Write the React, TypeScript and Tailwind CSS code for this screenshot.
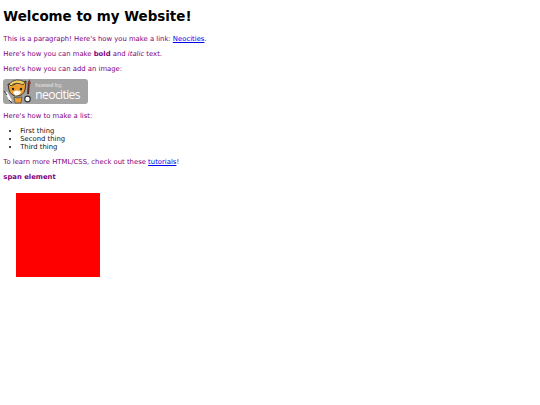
export default function App() {
  return (
    <div className="min-h-[405px] bg-white px-[3.36px] pt-[9px] text-[6.85px] leading-[8px] text-[#800080] [font-family:'DejaVu_Sans',sans-serif]">
      <h1 className="text-[13.44px] font-bold leading-[15.6px] text-black">Welcome to my Website!</h1>
      <p className="mt-[10px]">
        This is a paragraph! Here's how you make a link: <a className="text-[#0000ee] underline" href="#">Neocities</a>.
      </p>
      <p className="mt-[7px]">
        Here's how you can make <b>bold</b> and <i>italic</i> text.
      </p>
      <p className="mt-[7px]">Here's how you can add an image:</p>
      <div className="relative mt-[6px] flex h-[25px] w-[85px] overflow-hidden rounded-[3px] bg-[#a3a3a3]">
        <svg viewBox="0 0 30 25" className="h-[25px] w-[30px] shrink-0">
          <path d="M6 11 L5 5 L10 6 Q14 3 19 4 L23 2 L22 11 Q20 17 14 17 Q8 17 6 11Z" fill="#f0a030" stroke="#333" strokeWidth="1" />
          <path d="M6 5 Q13 -2 22 3 L20 6 Q13 2 8 7Z" fill="#f5d060" stroke="#333" strokeWidth=".8" />
          <path d="M10 13 Q14 10 18 13 Q16 17 12 16.5Z" fill="#fff" />
          <circle cx="10" cy="10" r="1.2" fill="#222" />
          <circle cx="18" cy="10" r="1.2" fill="#222" />
          <path d="M26 2 L25 15" stroke="#5a2a20" strokeWidth="2" />
          <path d="M26.5 0 L28 5 L24.5 5Z" fill="#8a3a30" />
          <circle cx="24.5" cy="20" r="2.8" fill="#fff" stroke="#333" strokeWidth="1.2" />
          <path d="M3 13 L8 22" stroke="#fff" strokeWidth="2.4" />
          <path d="M1 12 L4 16 M6 21 L9 24" stroke="#333" strokeWidth="1" />
          <path d="M11 18 Q15 20 19 18 L18 24 L12 24Z" fill="#f0a030" stroke="#333" strokeWidth=".6" />
        </svg>
        <div className="ml-[2px] flex flex-col text-white">
          <span className="mt-[3px] text-[6px] leading-[6px] text-[#e8e8e8] [font-family:'Liberation_Sans',sans-serif]">hosted by,</span>
          <span className="text-[12px] leading-[13px] tracking-[-0.6px] [font-family:'Open_Sans',sans-serif]">neocities</span>
        </div>
      </div>
      <p className="mt-[8px]">Here's how to make a list:</p>
      <ul className="mt-[7px] list-disc pl-[16.8px] text-[#111]">
        <li>First thing</li>
        <li>Second thing</li>
        <li>Third thing</li>
      </ul>
      <p className="mt-[7px]">
        To learn more HTML/CSS, check out these <a className="text-[#0000ee] underline" href="#">tutorials</a>!
      </p>
      <p className="mt-[7px] font-bold">span element</p>
      <div className="ml-[12.6px] mt-[12px] h-[84px] w-[84px] bg-[#ff0000]" />
    </div>
  );
}
